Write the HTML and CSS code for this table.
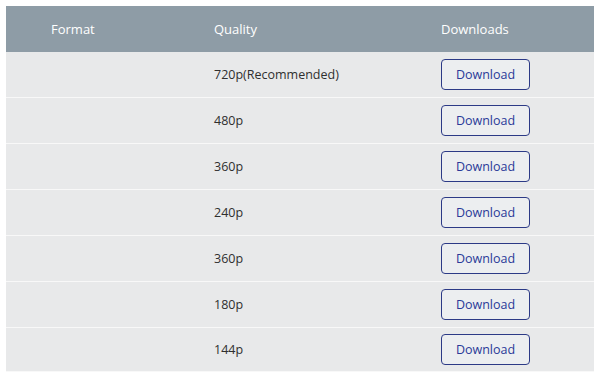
FILE: index.html
```html
<!DOCTYPE html>
<html>
<head>
<meta charset="utf-8">
<link rel="stylesheet" href="styles.css">
</head>
<body>
<div class="table">
  <div class="row head">
    <div class="cell">Format</div>
    <div class="cell">Quality</div>
    <div class="cell">Downloads</div>
  </div>
  <div class="row">
    <div class="cell"></div>
    <div class="cell">720p(Recommended)</div>
    <div class="cell"><button class="btn">Download</button></div>
  </div>
  <div class="row">
    <div class="cell"></div>
    <div class="cell">480p</div>
    <div class="cell"><button class="btn">Download</button></div>
  </div>
  <div class="row">
    <div class="cell"></div>
    <div class="cell">360p</div>
    <div class="cell"><button class="btn">Download</button></div>
  </div>
  <div class="row">
    <div class="cell"></div>
    <div class="cell">240p</div>
    <div class="cell"><button class="btn">Download</button></div>
  </div>
  <div class="row">
    <div class="cell"></div>
    <div class="cell">360p</div>
    <div class="cell"><button class="btn">Download</button></div>
  </div>
  <div class="row">
    <div class="cell"></div>
    <div class="cell">180p</div>
    <div class="cell"><button class="btn">Download</button></div>
  </div>
  <div class="row last">
    <div class="cell"></div>
    <div class="cell">144p</div>
    <div class="cell"><button class="btn">Download</button></div>
  </div>
</div>
</body>
</html>
```

FILE: styles.css
```css
html, body {
  margin: 0;
  background: #ffffff;
}

body {
  padding: 6px 6px 0 6px;
  font-family: "Open Sans", "Liberation Sans", sans-serif;
  font-size: 12.5px;
  color: #2f2f2f;
}

.table {
  display: flex;
  flex-direction: column;
  background: #e8e9ea;
  width: 588px;
}

.row {
  display: grid;
  grid-template-columns: 163px 227px 1fr;
  height: 45px;
  align-items: center;
  border-bottom: 1px solid #f8f8f8;
}

.row.last {
  height: 43px;
}

.row.head {
  background: #8e9ca6;
  color: #ffffff;
  height: 46px;
  border-bottom: none;
  font-size: 13px;
}

.cell {
  padding-left: 45px;
}

.btn {
  width: 89px;
  height: 31px;
  box-sizing: border-box;
  border: 1px solid #2c3a86;
  border-radius: 4px;
  background: #eceef0;
  color: #2a3998;
  font-family: "Open Sans", "Liberation Sans", sans-serif;
  font-size: 12.5px;
  font-weight: 500;
  padding: 0;
  cursor: pointer;
}
```
